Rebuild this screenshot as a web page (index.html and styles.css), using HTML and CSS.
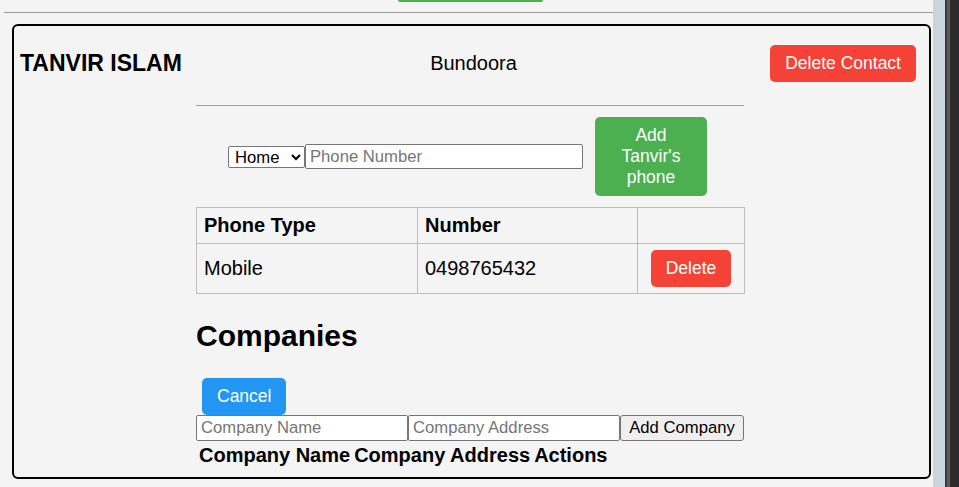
FILE: index.html
```html
<!DOCTYPE html>
<html lang="en">
<head>
<meta charset="utf-8">
<title>Contacts</title>
<link rel="stylesheet" href="styles.css">
</head>
<body>
<div class="screen">
  <main class="page">
    <div class="top-action"><span class="top-btn"></span></div>
    <div class="divider"></div>

    <section class="card">
      <header class="card-head">
        <h3 class="contact-name">TANVIR ISLAM</h3>
        <p class="contact-address">Bundoora</p>
        <button class="btn btn-red" type="button">Delete Contact</button>
      </header>

      <div class="card-body">
        <div class="rule"></div>

        <form class="phone-form">
          <select class="field select">
            <option>Home</option>
            <option>Mobile</option>
            <option>Work</option>
          </select>
          <input class="field phone-input" type="text" placeholder="Phone Number">
          <button class="btn btn-green add-phone" type="button">Add Tanvir's phone</button>
        </form>

        <table class="phone-table">
          <colgroup>
            <col class="c-type">
            <col class="c-number">
            <col class="c-action">
          </colgroup>
          <thead>
            <tr><th>Phone Type</th><th>Number</th><th></th></tr>
          </thead>
          <tbody>
            <tr>
              <td>Mobile</td>
              <td>0498765432</td>
              <td class="action-cell"><button class="btn btn-red" type="button">Delete</button></td>
            </tr>
          </tbody>
        </table>

        <h2 class="section-title">Companies</h2>

        <div class="cancel-row"><button class="btn btn-blue" type="button">Cancel</button></div>

        <form class="company-form">
          <input class="field company-input" type="text" placeholder="Company Name">
          <input class="field company-input" type="text" placeholder="Company Address">
          <button class="plain-btn" type="button">Add Company</button>
        </form>

        <table class="company-table">
          <thead>
            <tr><th>Company Name</th><th>Company Address</th><th>Actions</th></tr>
          </thead>
        </table>
      </div>
    </section>

    <section class="card card-next"></section>
  </main>
  <div class="scrollbar">
    <span class="sb-track"></span>
    <span class="sb-gap"></span>
    <span class="sb-line"></span>
    <span class="sb-dark"></span>
  </div>
</div>
</body>
</html>
```

FILE: styles.css
```css
html, body {
  margin: 0;
  padding: 0;
  height: 487px;
  overflow: hidden;
}

body {
  background: #f4f4f4;
  color: #000;
  font-family: "Liberation Sans", Arial, sans-serif;
  font-size: 20px;
}

.screen {
  display: flex;
  height: 487px;
}

.page {
  width: 933px;
  flex: none;
  padding-left: 4px;
  box-sizing: border-box;
}

.top-action {
  height: 2px;
  display: flex;
  padding-left: 394px;
}

.top-btn {
  display: block;
  width: 145px;
  height: 2px;
  background: #4caf50;
  border-radius: 0 0 3px 3px;
}

.divider {
  margin-top: 10px;
  border-top: 1px solid #9c9c9c;
}

.btn {
  border: none;
  border-radius: 5px;
  color: #fff;
  font-family: "Liberation Sans", Arial, sans-serif;
  font-size: 17.5px;
  padding: 8px 15px;
  line-height: normal;
  cursor: pointer;
}

.btn-green { background: #4caf50; }
.btn-red { background: #f44336; }
.btn-blue { background: #2196f3; }

.card {
  margin: 11px 2px 0 8px;
  border: 2px solid #000;
  border-radius: 6px;
  padding: 0 13px 7px 6px;
}

.card-next {
  margin-top: 8px;
  height: 200px;
}

.card-head {
  height: 74px;
  display: flex;
  align-items: center;
  justify-content: space-between;
}

.contact-name {
  margin: 0;
  font-size: 23px;
  font-weight: bold;
}

.contact-address {
  margin: 0 5px 0 0;
  font-size: 20px;
}

.card-body {
  width: 548px;
  margin-left: 176px;
}

.rule {
  margin-top: 5px;
  border-top: 1px solid #a0a0a0;
}

.phone-form {
  margin: 11px 0 0;
  display: flex;
  align-items: center;
  padding-left: 32px;
}

.field {
  font-family: "Liberation Sans", Arial, sans-serif;
  font-size: 16.67px;
  border: 1px solid #767676;
  border-radius: 2px;
  background: #fff;
  box-sizing: border-box;
  margin: 0;
  color: #000;
}

.field::placeholder {
  color: #757575;
}

.select {
  width: 77px;
  height: 22px;
  padding: 0 0 0 2px;
}

.phone-input {
  width: 278px;
  height: 25px;
  padding: 1px 4px;
}

.add-phone {
  width: 112px;
  margin-left: 12px;
  flex: none;
}

.phone-table {
  margin-top: 11px;
  width: 548px;
  border-collapse: collapse;
  table-layout: fixed;
}

.c-type { width: 221px; }
.c-number { width: 220px; }
.c-action { width: 107px; }

.phone-table th,
.phone-table td {
  border: 1px solid #bcbcbc;
  padding: 6px 7px;
  text-align: left;
  font-size: 20px;
}

.phone-table th {
  font-weight: bold;
}

.phone-table .action-cell {
  text-align: center;
}

.section-title {
  margin: 25px 0 25px;
  font-size: 30px;
  font-weight: bold;
}

.cancel-row {
  padding-left: 6px;
  display: flex;
}

.company-form {
  margin: 0;
  display: flex;
}

.company-input {
  width: 212px;
  height: 26px;
  padding: 1px 4px;
}

.plain-btn {
  width: 125px;
  height: 26px;
  margin: 0;
  border: 1px solid #767676;
  border-radius: 3px;
  background: #efefef;
  color: #000;
  font-family: "Liberation Sans", Arial, sans-serif;
  font-size: 16.67px;
  padding: 0;
}

.company-table {
  border-spacing: 2px;
}

.company-table th {
  padding: 1px;
  font-size: 20px;
  font-weight: bold;
}

.scrollbar {
  flex: 1;
  display: flex;
}

.sb-track { width: 12px; background: #c9d4dd; }
.sb-gap { width: 2px; background: #3a3a3a; }
.sb-line { width: 3px; background: #5a5a5a; }
.sb-dark { flex: 1; background: #2b2b2b; }
```
